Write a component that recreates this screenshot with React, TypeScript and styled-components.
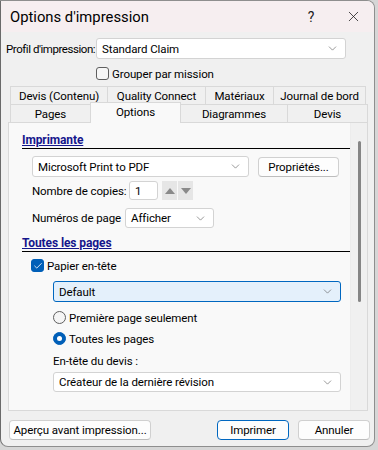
import styled, { createGlobalStyle } from "styled-components";
import { X, Check, ChevronDown } from "lucide-react";

const GlobalStyle = createGlobalStyle`
  body {
    margin: 0;
    background: #d6d6d6;
    font-family: "Segoe UI", Roboto, "Noto Sans", sans-serif;
    font-size: 11.5px;
    letter-spacing: -0.1px;
    color: #000;
  }
`;

const Dialog = styled.div`
  box-sizing: border-box;
  width: 375px;
  height: 447px;
  background: #f0f0f0;
  border: 1px solid #8e8e8e;
  border-left-color: #6a6a6a;
  border-radius: 0 8px 8px 8px;
  overflow: hidden;
  display: flex;
  flex-direction: column;
`;

const TitleBar = styled.div`
  height: 31px;
  flex-shrink: 0;
  display: flex;
  align-items: center;
  padding-left: 9px;
  background: #f6eef0;
`;

const Title = styled.div`
  font-size: 14.8px;
  letter-spacing: 0;
  flex: 1;
`;

const TitleButton = styled.div`
  width: 42px;
  height: 31px;
  display: flex;
  align-items: center;
  justify-content: center;
  font-size: 14px;
  color: #1a1a1a;
`;

const Body = styled.div`
  flex: 1;
  display: flex;
  flex-direction: column;
  padding-top: 6px;
`;

const ProfileRow = styled.div`
  display: flex;
  align-items: center;
  padding-left: 5px;
`;

const Label = styled.div<{ $w?: number; $tight?: boolean }>`
  width: ${(p) => (p.$w ? `${p.$w}px` : "auto")};
  flex-shrink: 0;
  white-space: nowrap;
  letter-spacing: ${(p) => (p.$tight ? "-0.45px" : "inherit")};
`;

const Select = styled.div<{ $w?: number; $h?: number; $active?: boolean }>`
  box-sizing: border-box;
  width: ${(p) => (p.$w ? `${p.$w}px` : "auto")};
  height: ${(p) => p.$h ?? 21}px;
  display: flex;
  align-items: center;
  padding: 0 6px 0 5px;
  background: ${(p) => (p.$active ? "#e4f0fb" : "#ffffff")};
  border: 1px solid ${(p) => (p.$active ? "#0067c0" : "#d3d3d3")};
  border-radius: 3px;
  white-space: nowrap;

  span {
    flex: 1;
  }
`;

const CheckRow = styled.div<{ $indent: number; $mt: number }>`
  display: flex;
  align-items: center;
  gap: 3px;
  margin-left: ${(p) => p.$indent}px;
  margin-top: ${(p) => p.$mt}px;
  height: 13px;
`;

const Box = styled.div<{ $checked?: boolean }>`
  box-sizing: border-box;
  width: 13px;
  height: 13px;
  border-radius: 3px;
  display: flex;
  align-items: center;
  justify-content: center;
  background: ${(p) => (p.$checked ? "#005fb8" : "#f7f7f7")};
  border: 1px solid ${(p) => (p.$checked ? "#005fb8" : "#5f5f5f")};
`;

const Radio = styled.div<{ $checked?: boolean }>`
  box-sizing: border-box;
  width: 13px;
  height: 13px;
  border-radius: 50%;
  background: ${(p) => (p.$checked ? "#005fb8" : "#f5f5f5")};
  border: 1px solid ${(p) => (p.$checked ? "#005fb8" : "#5f5f5f")};
  display: flex;
  align-items: center;
  justify-content: center;

  &::after {
    content: "";
    display: ${(p) => (p.$checked ? "block" : "none")};
    width: 5px;
    height: 5px;
    border-radius: 50%;
    background: #fff;
  }
`;

const Tabs = styled.div`
  margin: 6px 0 0 7px;
  width: 359px;
`;

const TabRow = styled.div<{ $front?: boolean }>`
  display: flex;
  align-items: flex-end;
  height: 18px;
  padding-left: 2px;
  position: relative;
  z-index: ${(p) => (p.$front ? 2 : 1)};
`;

const Tab = styled.div<{ $w: number; $selected?: boolean }>`
  box-sizing: border-box;
  width: ${(p) => p.$w}px;
  height: ${(p) => (p.$selected ? 21 : 18)}px;
  margin-bottom: ${(p) => (p.$selected ? -1 : 0)}px;
  margin-right: -1px;
  display: flex;
  align-items: center;
  justify-content: center;
  padding-bottom: ${(p) => (p.$selected ? 2 : 0)}px;
  border: 1px solid #d9d9d9;
  border-bottom: none;
  background: ${(p) => (p.$selected ? "#f9f9f9" : "#f0f0f0")};
  white-space: nowrap;
  position: relative;
  z-index: ${(p) => (p.$selected ? 3 : 1)};
`;

const Panel = styled.div`
  box-sizing: border-box;
  margin-left: 7px;
  width: 360px;
  height: 289px;
  display: flex;
  border: 1px solid #d9d9d9;
  background: #f9f9f9;
`;

const Content = styled.div`
  flex: 1;
  padding: 11px 0 0 13px;
  display: flex;
  flex-direction: column;
`;

const ScrollTrack = styled.div`
  width: 16px;
  background: #f0f0f0;
  border-left: 1px solid #ececec;
  padding-top: 18px;
  display: flex;
  justify-content: center;
`;

const Thumb = styled.div`
  width: 3px;
  height: 161px;
  border-radius: 2px;
  background: #858585;
`;

const Heading = styled.div<{ $mt?: number }>`
  margin-top: ${(p) => p.$mt ?? 0}px;
  font-weight: 700;
  font-size: 12px;
  line-height: 13px;
  color: #15168c;
  text-decoration: underline;
  text-decoration-color: #15168c;
  text-underline-offset: 1px;
  border-bottom: 1px solid #000;
  padding-bottom: 1px;
`;

const Row = styled.div<{ $mt: number; $indent?: number; $h?: number }>`
  display: flex;
  align-items: center;
  margin-top: ${(p) => p.$mt}px;
  margin-left: ${(p) => p.$indent ?? 10}px;
  height: ${(p) => p.$h ?? 21}px;
`;

const Button = styled.div<{ $w: number; $default?: boolean; $ml?: number }>`
  box-sizing: border-box;
  width: ${(p) => p.$w}px;
  height: 20px;
  margin-left: ${(p) => p.$ml ?? 0}px;
  display: flex;
  align-items: center;
  justify-content: center;
  background: #fdfdfd;
  border: 1px solid ${(p) => (p.$default ? "#0067c0" : "#d0d0d0")};
  border-bottom-color: ${(p) => (p.$default ? "#0067c0" : "#bdbdbd")};
  border-radius: 4px;
  white-space: nowrap;
`;

const NumberInput = styled.div`
  box-sizing: border-box;
  width: 29px;
  height: 19px;
  display: flex;
  align-items: center;
  padding-left: 5px;
  background: #fff;
  border: 1px solid #d3d3d3;
  border-radius: 3px;
`;

const Spin = styled.div<{ $first?: boolean }>`
  width: 15px;
  height: 19px;
  margin-left: ${(p) => (p.$first ? 4 : 1)}px;
  background: #e6e6e6;
  display: flex;
  align-items: center;
  justify-content: center;
`;

const Triangle = styled.div<{ $down?: boolean }>`
  width: 0;
  height: 0;
  border-left: 5px solid transparent;
  border-right: 5px solid transparent;
  ${(p) => (p.$down ? "border-top" : "border-bottom")}: 6px solid #8a8a8a;
`;

const Footer = styled.div`
  display: flex;
  justify-content: space-between;
  margin-top: 9px;
  padding: 0 4px 0 8px;
`;

const ButtonGroup = styled.div`
  display: flex;
  gap: 9px;
`;

const chevron = <ChevronDown size={13} strokeWidth={1.1} color="#555" />;

export default function App() {
  return (
    <>
      <GlobalStyle />
      <Dialog>
        <TitleBar>
          <Title>Options d'impression</Title>
          <TitleButton>?</TitleButton>
          <TitleButton>
            <X size={17} strokeWidth={1.1} />
          </TitleButton>
        </TitleBar>
        <Body>
          <ProfileRow>
            <Label $w={90} $tight>
              Profil d'impression:
            </Label>
            <Select $w={250}>
              <span>Standard Claim</span>
              {chevron}
            </Select>
          </ProfileRow>
          <CheckRow $indent={95} $mt={8}>
            <Box />
            <span>Grouper par mission</span>
          </CheckRow>

          <Tabs>
            <TabRow>
              <Tab $w={98}>Devis (Contenu)</Tab>
              <Tab $w={99}>Quality Connect</Tab>
              <Tab $w={69}>Matériaux</Tab>
              <Tab $w={93}>Journal de bord</Tab>
            </TabRow>
            <TabRow $front>
              <Tab $w={81}>Pages</Tab>
              <Tab $w={91} $selected>
                Options
              </Tab>
              <Tab $w={108}>Diagrammes</Tab>
              <Tab $w={81}>Devis</Tab>
            </TabRow>
          </Tabs>

          <Panel>
            <Content>
              <Heading>Imprimante</Heading>
              <Row $mt={7}>
                <Select $w={217}>
                  <span>Microsoft Print to PDF</span>
                  {chevron}
                </Select>
                <Button $w={81} $ml={9}>
                  Propriétés...
                </Button>
              </Row>
              <Row $mt={4} $h={19}>
                <Label $w={97}>Nombre de copies:</Label>
                <NumberInput>1</NumberInput>
                <Spin $first>
                  <Triangle />
                </Spin>
                <Spin>
                  <Triangle $down />
                </Spin>
              </Row>
              <Row $mt={8} $h={20}>
                <Label $w={93}>Numéros de page</Label>
                <Select $w={89} $h={20}>
                  <span>Afficher</span>
                  {chevron}
                </Select>
              </Row>

              <Heading $mt={9}>Toutes les pages</Heading>
              <CheckRow $indent={9} $mt={7}>
                <Box $checked>
                  <Check size={10} strokeWidth={2} color="#fff" />
                </Box>
                <span>Papier en-tête</span>
              </CheckRow>
              <Row $mt={9} $indent={31}>
                <Select $w={288} $active>
                  <span>Default</span>
                  {chevron}
                </Select>
              </Row>
              <CheckRow $indent={31} $mt={9}>
                <Radio />
                <span>Première page seulement</span>
              </CheckRow>
              <CheckRow $indent={31} $mt={8}>
                <Radio $checked />
                <span>Toutes les pages</span>
              </CheckRow>
              <Row $mt={9} $indent={31} $h={14}>
                <Label>En-tête du devis :</Label>
              </Row>
              <Row $mt={4} $indent={31} $h={20}>
                <Select $w={288} $h={20}>
                  <span>Créateur de la dernière révision</span>
                  {chevron}
                </Select>
              </Row>
            </Content>
            <ScrollTrack>
              <Thumb />
            </ScrollTrack>
          </Panel>

          <Footer>
            <Button $w={142}>Aperçu avant impression...</Button>
            <ButtonGroup>
              <Button $w={72} $default>
                Imprimer
              </Button>
              <Button $w={72}>Annuler</Button>
            </ButtonGroup>
          </Footer>
        </Body>
      </Dialog>
    </>
  );
}
